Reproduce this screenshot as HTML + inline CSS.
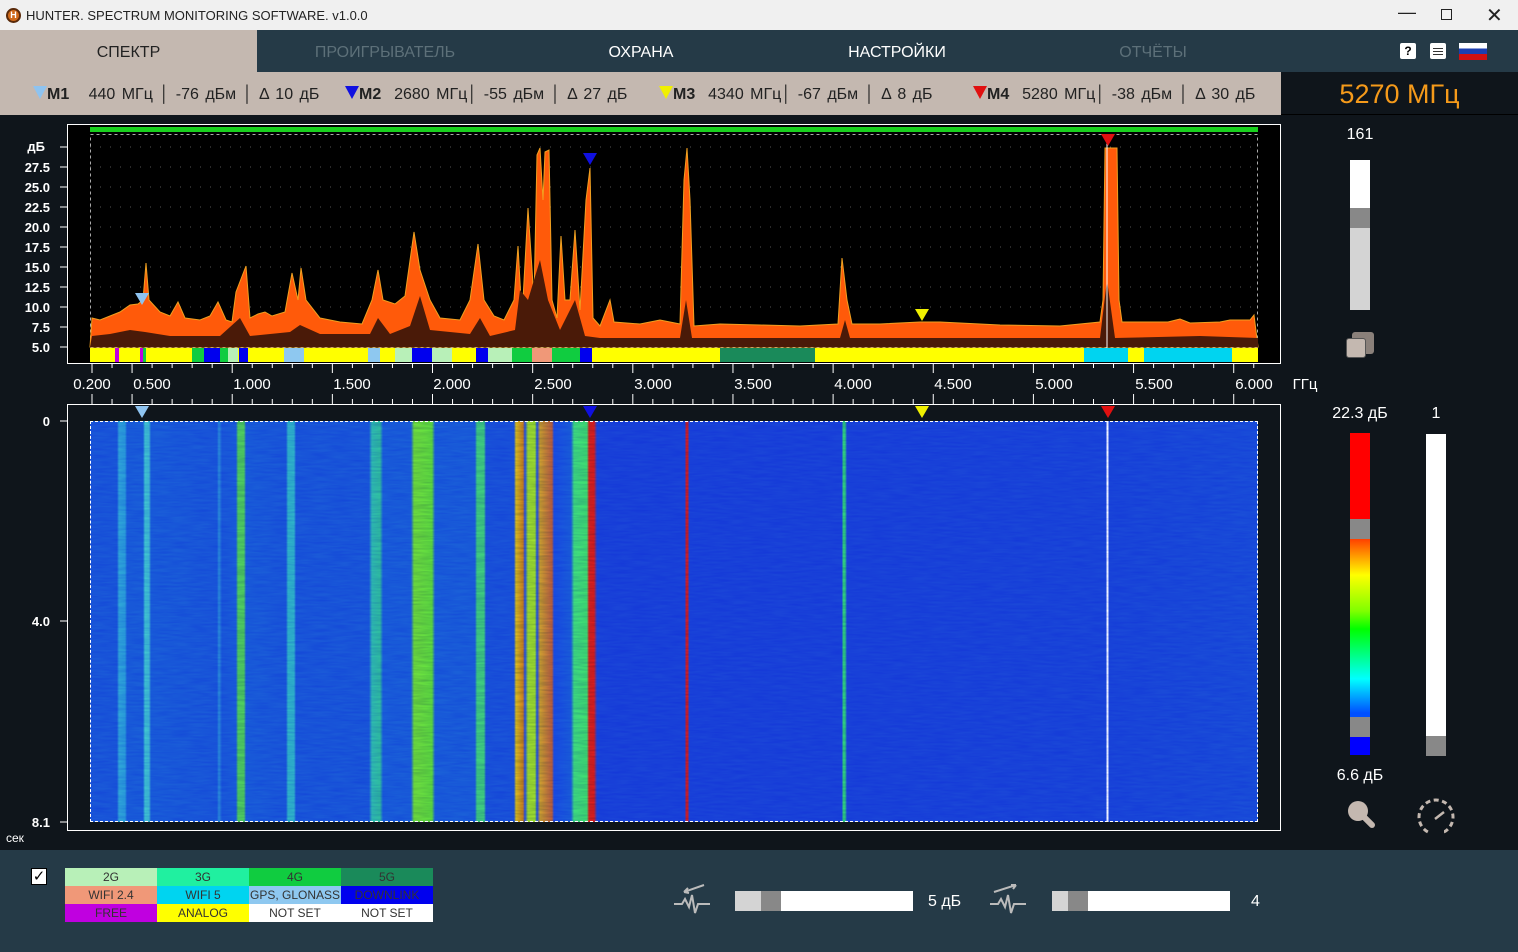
<!DOCTYPE html>
<html><head><meta charset="utf-8">
<style>
*{margin:0;padding:0;box-sizing:border-box}
body{width:1518px;height:952px;overflow:hidden;background:#0f151b;font-family:"Liberation Sans",sans-serif;position:relative;color:#fff}
.abs{position:absolute}
#title{left:0;top:0;width:1518px;height:30px;background:#f0f0f0;color:#222;font-size:13px}
#tabs{left:0;top:30px;width:1518px;height:42px;background:#253a47}
.tab{position:absolute;top:0;height:42px;line-height:46px;text-align:center;font-size:16px;width:256px}
#mk{left:0;top:72px;width:1281px;height:43px;background:#c4b8b0;color:#222;font-size:16px;white-space:nowrap;word-spacing:2px}
#mk span{position:absolute;top:14px}
.tri{display:inline-block;width:0;height:0;border-left:7px solid transparent;border-right:7px solid transparent;border-top:13px solid}
#bottom{left:0;top:850px;width:1518px;height:102px;background:#253a47}
.leg{position:absolute;width:92px;height:18px;line-height:18px;text-align:center;font-size:12px;color:#333}
</style></head><body>
<div id="title" class="abs">
 <div class="abs" style="left:6px;top:8px;width:15px;height:15px;border-radius:50%;background:#d06a1a;border:2px solid #5a2a0a;font-size:9px;color:#fff;text-align:center;line-height:11px;font-weight:bold">H</div>
 <div class="abs" style="left:26px;top:8px">HUNTER. SPECTRUM MONITORING SOFTWARE. v1.0.0</div>
 <div class="abs" style="left:1398px;top:2px;font-size:18px">—</div>
 <div class="abs" style="left:1441px;top:9px;width:11px;height:11px;border:1px solid #222"></div>
 <div class="abs" style="left:1486px;top:3px;font-size:20px">✕</div>
</div>
<div id="tabs" class="abs">
 <div class="tab" style="left:0;width:257px;background:#c4b8b0;color:#222">СПЕКТР</div>
 <div class="tab" style="left:257px;color:#5d7079">ПРОИГРЫВАТЕЛЬ</div>
 <div class="tab" style="left:513px;color:#fff">ОХРАНА</div>
 <div class="tab" style="left:769px;color:#fff">НАСТРОЙКИ</div>
 <div class="tab" style="left:1025px;color:#5d7079">ОТЧЁТЫ</div>
 <div class="abs" style="left:1400px;top:13px;width:16px;height:16px;background:#fff;border-radius:2px;color:#000;font-size:12px;font-weight:bold;text-align:center;line-height:16px">?</div>
 <div class="abs" style="left:1430px;top:13px;width:16px;height:16px;background:#fff;border-radius:2px"><div style="margin:5px 3px;height:1px;background:#333;box-shadow:0 3px #333,0 6px #333"></div></div>
 <div class="abs" style="left:1459px;top:13px;width:28px;height:17px;background:linear-gradient(#fff 0 33%,#1c3fb0 33% 66%,#d01010 66%)"></div>
</div>
<div id="mk" class="abs">
 <span style="left:33px"><i class="tri" style="border-top-color:#8ec3f0"></i><b>M1</b>&nbsp;&nbsp; 440 МГц │ -76 дБм │ Δ 10 дБ</span>
 <span style="left:345px"><i class="tri" style="border-top-color:#1010e0"></i><b>M2</b>&nbsp; 2680 МГц│ -55 дБм │ Δ 27 дБ</span>
 <span style="left:659px"><i class="tri" style="border-top-color:#f0f000"></i><b>M3</b>&nbsp; 4340 МГц│ -67 дБм │ Δ 8 дБ</span>
 <span style="left:973px"><i class="tri" style="border-top-color:#e01010"></i><b>M4</b>&nbsp; 5280 МГц│ -38 дБм │ Δ 30 дБ</span>
</div>
<div class="abs" style="left:1281px;top:72px;width:237px;height:43px;border-bottom:1px solid #000;color:#f59a1a;font-size:27px;text-align:center;line-height:45px">5270 МГц</div>

<svg class="abs" style="left:0;top:115px" width="1518" height="735">
<g transform="translate(0,-115)">
<rect x="67.5" y="124.5" width="1213" height="239" fill="#000" stroke="#fff"/>
<rect x="90" y="127" width="1168" height="5" fill="#19d01e"/>
<g stroke="#555" stroke-dasharray="1 9">
<line x1="90" y1="147" x2="1258" y2="147"/><line x1="90" y1="167" x2="1258" y2="167"/><line x1="90" y1="187" x2="1258" y2="187"/><line x1="90" y1="207" x2="1258" y2="207"/><line x1="90" y1="227" x2="1258" y2="227"/><line x1="90" y1="247" x2="1258" y2="247"/><line x1="90" y1="267" x2="1258" y2="267"/><line x1="90" y1="287" x2="1258" y2="287"/><line x1="90" y1="307" x2="1258" y2="307"/><line x1="90" y1="327" x2="1258" y2="327"/>
</g>
<rect x="90.5" y="134.5" width="1167" height="213" fill="none" stroke="#aaa" stroke-dasharray="3 3"/>
<polygon fill="#ff5a0a" stroke="#f0a020" stroke-width="1" points="90,347 92,318 100,320 110,316 120,312 130,305 138,304 143,300 146,263 149,300 160,312 170,316 178,302 185,318 200,320 210,316 218,302 226,320 232,322 236,292 246,266 250,318 258,314 265,312 272,316 285,312 292,273 298,300 301,268 306,300 320,318 340,322 362,324 372,300 378,270 383,300 395,304 405,296 414,232 420,270 430,300 440,318 460,320 470,300 478,244 484,300 494,316 504,320 514,300 518,246 522,318 528,208 534,300 537,155 540,148 543,200 545,152 549,150 552,300 557,318 561,236 565,300 570,300 575,230 580,310 586,200 590,168 593,318 600,326 610,300 614,322 640,324 660,320 680,324 684,180 687,148 690,200 694,326 720,324 760,325 800,326 838,324 842,258 847,300 852,324 880,324 920,322 940,322 1000,325 1060,326 1100,322 1103,300 1105,148 1117,148 1119,300 1122,322 1140,322 1168,322 1180,319 1190,323 1220,322 1230,320 1250,320 1254,315 1258,347"/>
<polygon fill="#4a1a08" points="90,347 92,336 110,334 130,330 145,332 170,336 220,336 240,318 250,336 290,332 300,325 320,334 370,334 378,318 390,334 410,326 420,296 430,330 470,334 480,318 490,336 515,330 520,290 528,300 540,260 548,300 560,330 575,300 585,336 600,338 680,338 686,300 692,338 840,338 845,320 850,338 1100,338 1107,280 1115,338 1200,336 1258,338 1258,347"/>
<g>
<rect x="90" y="348" width="1168" height="14" fill="#ffff00"/>
<rect x="115" y="348" width="4" height="14" fill="#c000e0"/><rect x="140" y="348" width="3" height="14" fill="#c000e0"/><rect x="143" y="348" width="3" height="14" fill="#10cc40"/>
<rect x="192" y="348" width="12" height="14" fill="#10cc40"/><rect x="204" y="348" width="16" height="14" fill="#0000ee"/><rect x="220" y="348" width="8" height="14" fill="#10cc40"/><rect x="228" y="348" width="10" height="14" fill="#b8f0b8"/><rect x="239" y="348" width="9" height="14" fill="#0000ee"/>
<rect x="284" y="348" width="20" height="14" fill="#8ec8f0"/><rect x="368" y="348" width="12" height="14" fill="#8ec8f0"/><rect x="395" y="348" width="17" height="14" fill="#b8f0b8"/><rect x="412" y="348" width="20" height="14" fill="#0000ee"/><rect x="432" y="348" width="20" height="14" fill="#b8f0b8"/><rect x="476" y="348" width="12" height="14" fill="#0000ee"/><rect x="488" y="348" width="24" height="14" fill="#b8f0b8"/>
<rect x="512" y="348" width="20" height="14" fill="#10cc40"/><rect x="532" y="348" width="20" height="14" fill="#f09878"/><rect x="552" y="348" width="28" height="14" fill="#10cc40"/><rect x="580" y="348" width="12" height="14" fill="#0000ee"/>
<rect x="720" y="348" width="95" height="14" fill="#1a8a5a"/><rect x="1084" y="348" width="44" height="14" fill="#00d4f0"/><rect x="1144" y="348" width="88" height="14" fill="#00d4f0"/>
</g>
<line x1="1107" y1="134" x2="1107" y2="348" stroke="#fff"/>
<polygon points="135,293 149,293 142,305" fill="#8ec3f0"/>
<polygon points="583,153 597,153 590,165" fill="#1010e0"/>
<polygon points="915,309 929,309 922,321" fill="#f0f000"/>
<polygon points="1101,134 1115,134 1108,146" fill="#e01010"/>
<g stroke="#fff"><line x1="60" y1="147" x2="68" y2="147"/><line x1="60" y1="167" x2="68" y2="167"/><line x1="60" y1="187" x2="68" y2="187"/><line x1="60" y1="207" x2="68" y2="207"/><line x1="60" y1="227" x2="68" y2="227"/><line x1="60" y1="247" x2="68" y2="247"/><line x1="60" y1="267" x2="68" y2="267"/><line x1="60" y1="287" x2="68" y2="287"/><line x1="60" y1="307" x2="68" y2="307"/><line x1="60" y1="327" x2="68" y2="327"/><line x1="60" y1="347" x2="68" y2="347"/>
<line x1="60" y1="421" x2="68" y2="421"/><line x1="60" y1="621" x2="68" y2="621"/><line x1="60" y1="822" x2="68" y2="822"/></g>
<g fill="#fff" font-family="Liberation Sans" font-size="13" text-anchor="end" font-weight="bold">
<text x="45" y="151">дБ</text><text x="50" y="172">27.5</text><text x="50" y="192">25.0</text><text x="50" y="212">22.5</text><text x="50" y="232">20.0</text><text x="50" y="252">17.5</text><text x="50" y="272">15.0</text><text x="50" y="292">12.5</text><text x="50" y="312">10.0</text><text x="50" y="332">7.5</text><text x="50" y="352">5.0</text>
<text x="50" y="426">0</text><text x="50" y="626">4.0</text><text x="50" y="827">8.1</text>
</g>
<text x="6" y="842" fill="#fff" font-size="12" font-family="Liberation Sans">сек</text>
<g fill="#fff" font-family="Liberation Sans" font-size="15" text-anchor="middle">
<text x="92" y="389">0.200</text><text x="152" y="389">0.500</text><text x="252" y="389">1.000</text><text x="352" y="389">1.500</text><text x="452" y="389">2.000</text><text x="553" y="389">2.500</text><text x="653" y="389">3.000</text><text x="753" y="389">3.500</text><text x="853" y="389">4.000</text><text x="953" y="389">4.500</text><text x="1054" y="389">5.000</text><text x="1154" y="389">5.500</text><text x="1254" y="389">6.000</text><text x="1305" y="389">ГГц</text>
</g>
<g id="tk" stroke="#fff"></g>
<rect x="67.5" y="404.5" width="1213" height="426" fill="#0f151b" stroke="#fff"/>
<polygon points="135,406 149,406 142,418" fill="#8ec3f0"/>
<polygon points="583,406 597,406 590,418" fill="#1010e0"/>
<polygon points="915,406 929,406 922,418" fill="#f0f000"/>
<polygon points="1101,406 1115,406 1108,418" fill="#e01010"/>
</g>
</svg>
<div class="abs" style="left:90px;top:421px;width:1168px;height:401px;overflow:hidden;border:1px dashed #fff;
background:linear-gradient(90deg,#1a5ad8 0,#1a5ad8 26px,#30a8d8 28px,#2aa0d8 34px,#1a60d8 36px,#1a60d8 52px,#40c8d0 54px,#40c0d0 58px,#1a60d8 60px,#1a5ad8 126px,#2a90d8 128px,#1a5ad8 131px,#1a60d8 145px,#50d060 147px,#50d060 153px,#1a60d8 155px,#1a5ad8 195px,#30b8c8 197px,#30b8c8 203px,#1a5ad8 205px,#1a5ad8 278px,#30c0b0 281px,#30c0a0 289px,#1a60d8 292px,#1a60d8 320px,#70e040 323px,#60e040 341px,#1a60d8 344px,#1a60d8 384px,#40d080 386px,#40d080 393px,#1a55d8 395px,#1a55d8 423px,#e0c020 425px,#d08020 432px,#2050e0 434px,#a0e030 437px,#a0e030 444px,#1a50e0 446px,#d0a030 449px,#c06040 461px,#1a50e0 463px,#1a60d8 480px,#40e080 483px,#40e070 496px,#e02020 498px,#e02020 503px,#1a45d8 506px,#1a45d8 594px,#d02030 595px,#d02030 597px,#1a45d8 598px,#1a45d8 751px,#30d080 752px,#30d080 754px,#1a45d8 756px,#1a48d8 1015px,#ffffff 1016px,#ffffff 1017px,#1a48d8 1018px,#1a50d8 1168px)">
<svg width="1168" height="401" style="position:absolute;left:0;top:0;opacity:.6;mix-blend-mode:multiply"><filter id="n"><feTurbulence type="fractalNoise" baseFrequency="0.05 0.5" numOctaves="2" seed="3"/><feColorMatrix values="0 0 0 0 0.3  0 0 0 0 0.4  0 0 0 0 1  0 0 0 1.4 -0.3"/></filter><rect width="1168" height="401" filter="url(#n)"/></svg>
</div>

<div class="abs" style="left:1340px;top:126px;width:40px;text-align:center;font-size:16px">161</div>
<div class="abs" style="left:1350px;top:160px;width:20px;height:150px;background:linear-gradient(#fff 0 48px,#888 48px 68px,#d4d4d4 68px)"></div>
<div class="abs" style="left:1352px;top:332px;width:22px;height:22px;background:#8a807a;border-radius:3px"></div>
<div class="abs" style="left:1346px;top:338px;width:20px;height:20px;background:#c4b8b0;border-radius:3px;border:1px solid #555"></div>
<div class="abs" style="left:1320px;top:405px;width:80px;text-align:center;font-size:16px">22.3 дБ</div>
<div class="abs" style="left:1426px;top:405px;width:20px;text-align:center;font-size:16px">1</div>
<div class="abs" style="left:1350px;top:433px;width:20px;height:322px;background:linear-gradient(#ff0000 0 86px,#888 86px 106px,#ff4000 106px,#ffff00 142px,#80ff00 178px,#00ff00 196px,#00ffff 246px,#0050ff 280px,#0050ff 284px,#888 284px 304px,#0000ff 304px)"></div>
<div class="abs" style="left:1426px;top:434px;width:20px;height:322px;background:linear-gradient(#fff 0 302px,#888 302px)"></div>
<div class="abs" style="left:1320px;top:767px;width:80px;text-align:center;font-size:16px">6.6 дБ</div>
<svg class="abs" style="left:1340px;top:795px" width="120" height="40"><circle cx="18" cy="16" r="10" fill="#c4b8b0"/><line x1="24" y1="22" x2="32" y2="30" stroke="#c4b8b0" stroke-width="6" stroke-linecap="round"/>
<circle cx="96" cy="22" r="17" fill="none" stroke="#c4b8b0" stroke-width="3" stroke-dasharray="5 3.5" transform="rotate(90 96 22)"/><rect x="90" y="30" width="14" height="10" fill="#0f151b"/><line x1="95" y1="24" x2="104" y2="17" stroke="#c4b8b0" stroke-width="2.5"/></svg>

<div id="bottom" class="abs">
 <div class="abs" style="left:31px;top:18px;width:16px;height:17px;background:#fff;border:1px solid #000;color:#000;font-size:15px;text-align:center;line-height:16px">✓</div>
 <div class="leg" style="left:65px;top:18px;background:#b8f0b8">2G</div><div class="leg" style="left:157px;top:18px;background:#20f0a0">3G</div><div class="leg" style="left:249px;top:18px;background:#10cc40">4G</div><div class="leg" style="left:341px;top:18px;background:#1a8a5a">5G</div>
 <div class="leg" style="left:65px;top:36px;background:#f09878">WIFI 2.4</div><div class="leg" style="left:157px;top:36px;background:#00d4f0">WIFI 5</div><div class="leg" style="left:249px;top:36px;background:#8ec8f0">GPS, GLONASS</div><div class="leg" style="left:341px;top:36px;background:#0000ee">DOWNLINK</div>
 <div class="leg" style="left:65px;top:54px;background:#c000e0">FREE</div><div class="leg" style="left:157px;top:54px;background:#ffff00">ANALOG</div><div class="leg" style="left:249px;top:54px;background:#fff">NOT SET</div><div class="leg" style="left:341px;top:54px;background:#fff">NOT SET</div>
 <svg class="abs" style="left:672px;top:32px" width="44" height="36" fill="none" stroke="#bbb" stroke-width="2"><path d="M2 22h8l3-5 4 8 3-12 3 18 3-9h12"/><path d="M32 3L12 10M12 10l4-4M12 10l5 1"/></svg>
 <div class="abs" style="left:735px;top:41px;width:178px;height:20px;background:linear-gradient(90deg,#d4d4d4 0 26px,#888 26px 46px,#fff 46px)"></div>
 <div class="abs" style="left:928px;top:43px;font-size:16px">5 дБ</div>
 <svg class="abs" style="left:988px;top:32px" width="44" height="36" fill="none" stroke="#bbb" stroke-width="2"><path d="M2 22h8l3-5 4 8 3-12 3 18 3-9h12"/><path d="M6 10L28 3M28 3l-5 0M28 3l-3 4"/></svg>
 <div class="abs" style="left:1052px;top:41px;width:178px;height:20px;background:linear-gradient(90deg,#d4d4d4 0 16px,#888 16px 36px,#fff 36px)"></div>
 <div class="abs" style="left:1251px;top:43px;font-size:16px">4</div>
</div>
<script>
var g=document.getElementById('tk'),s='';
for(var i=0;i<59;i++){var x=92+i*20.03;var big=(i%5==2)||i==0;s+='<line x1="'+x+'" y1="363" x2="'+x+'" y2="'+(big?373:368)+'"/><line x1="'+x+'" y1="'+(big?394:399)+'" x2="'+x+'" y2="404"/>';}
g.innerHTML=s;
</script>
</body></html>
